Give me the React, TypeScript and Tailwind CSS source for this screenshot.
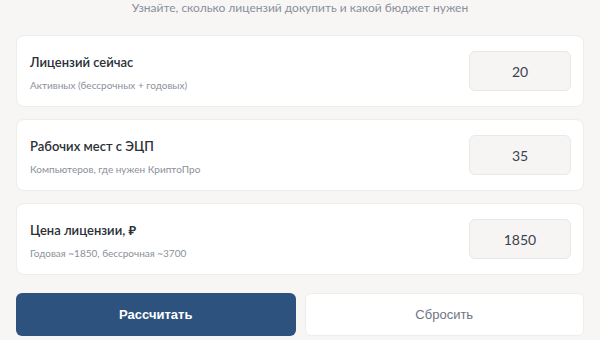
import React, { useState } from 'react';

const fields = [
  { id: 'now', label: 'Лицензий сейчас', hint: 'Активных (бессрочных + годовых)', value: '20' },
  { id: 'seats', label: 'Рабочих мест с ЭЦП', hint: 'Компьютеров, где нужен КриптоПро', value: '35' },
  { id: 'price', label: 'Цена лицензии, ₽', hint: 'Годовая ~1850, бессрочная ~3700', value: '1850' },
];

export default function App() {
  const [values, setValues] = useState<Record<string, string>>(
    Object.fromEntries(fields.map(f => [f.id, f.value]))
  );

  return (
    <div className="w-[600px] h-[340px] overflow-hidden bg-[#f7f6f4] font-['Lato','Noto_Sans',sans-serif]">
      <p className="text-center text-[12px] leading-[14px] text-[#8a8e9c] pt-[1px]">
        Узнайте, сколько лицензий докупить и какой бюджет нужен
      </p>

      <div className="px-4 mt-[20px] flex flex-col gap-3">
        {fields.map(f => (
          <div
            key={f.id}
            className="h-[72px] flex items-center justify-between bg-white rounded-lg border border-[#efedea] pl-[13px] pr-[12px]"
          >
            <div className="flex flex-col gap-[9px] pt-[2px]">
              <span className="text-[13px] leading-[16px] font-semibold text-[#2b2f38]">{f.label}</span>
              <span className="text-[10px] leading-[12px] text-[#8b909a]">{f.hint}</span>
            </div>
            <input
              value={values[f.id]}
              onChange={e => setValues({ ...values, [f.id]: e.target.value })}
              className="w-[102px] h-[40px] rounded-md bg-[#f6f5f3] border border-[#ebe9e6] text-center text-[14px] text-[#3b4150] focus:outline-none"
            />
          </div>
        ))}

        <div className="mt-[6px] grid grid-cols-2 gap-[9px]">
          <button className="h-[43px] rounded-md bg-[#2d527e] text-white text-[13px] font-semibold font-['Liberation_Sans',sans-serif]">
            Рассчитать
          </button>
          <button
            onClick={() => setValues(Object.fromEntries(fields.map(f => [f.id, f.value])))}
            className="h-[43px] rounded-md bg-white border border-[#efedea] text-[#6f7585] text-[13px] font-['Liberation_Sans',sans-serif]"
          >
            Сбросить
          </button>
        </div>
      </div>
    </div>
  );
}
